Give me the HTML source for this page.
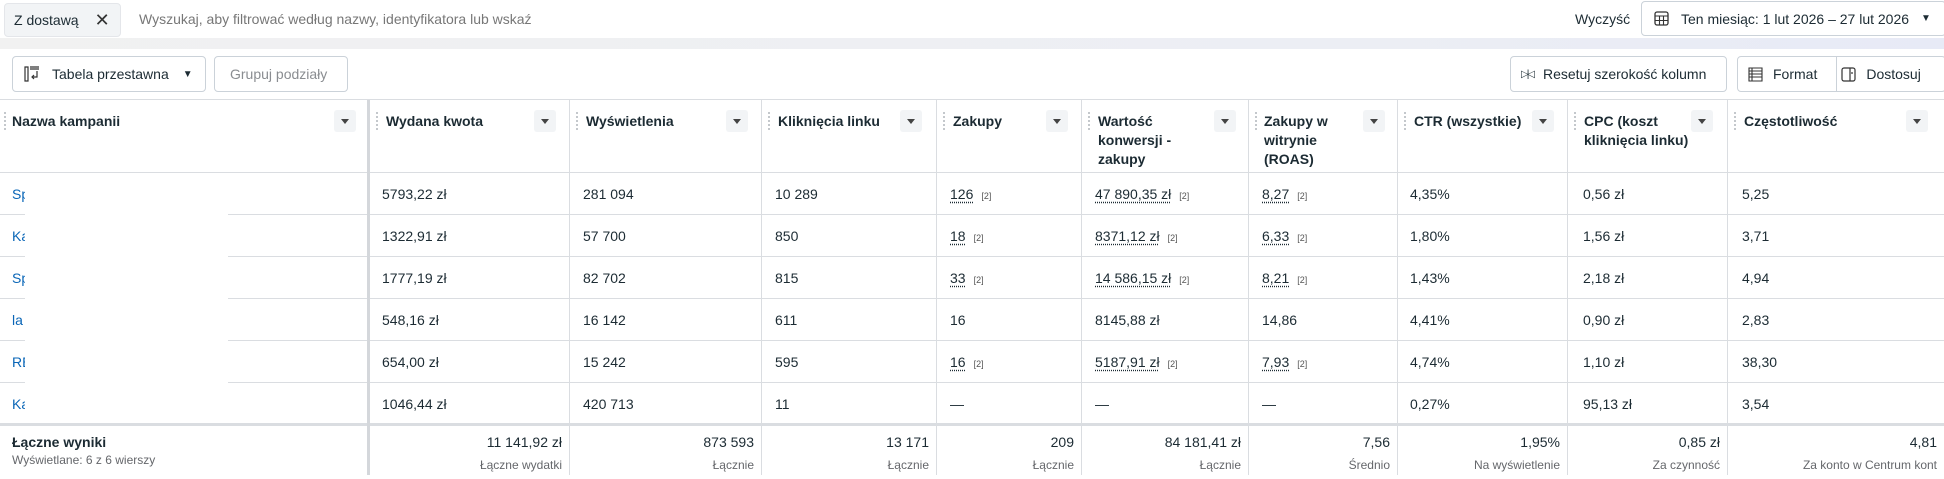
<!DOCTYPE html>
<html><head><meta charset="utf-8"><style>
*{box-sizing:border-box;margin:0;padding:0}
body{width:1944px;height:479px;overflow:hidden;background:#fff;font-family:"Liberation Sans",sans-serif;color:#1c2b33;font-size:14px;position:relative}
.a{position:absolute}
.btn{position:absolute;border:1px solid #cbd2d9;border-radius:4px;background:#fff;display:flex;align-items:center;font-size:14px}
.hl{position:absolute;left:0;width:1944px;height:1px;background:#dadde1}
.vl{position:absolute;top:100px;height:375px;width:1px;background:#dadde1}
.th{position:absolute;top:112px;font-weight:bold;font-size:14px;line-height:19px}
.sb{position:absolute;top:110px;width:22px;height:22px;background:#f2f4f6;border-radius:3px}
.sb:after{content:"";position:absolute;left:7px;top:9px;border-left:4px solid transparent;border-right:4px solid transparent;border-top:5px solid #444}
.dh{position:absolute;top:112px;width:2px;height:18px;border-left:2px dotted #c4c8cc}
.c{position:absolute;font-size:14px;white-space:nowrap}
.u{text-decoration:underline dotted;text-underline-offset:3px}
.s{font-size:9px;color:#555;margin-left:8px}
.t{position:absolute;text-align:right;font-size:14px;white-space:nowrap}
.t small{display:block;font-size:12px;color:#65676b;margin-top:8px}
.lk{color:#0a66b7}
</style></head><body>
<div class="btn" style="left:4px;top:3px;width:117px;height:34px;background:#f2f4f6;border-color:#e4e6ea;padding-left:9px">Z dostawą<span style="margin-left:16px;font-size:18px;color:#333">✕</span></div>
<div class="a" style="left:139px;top:11px;color:#777;font-size:14px">Wyszukaj, aby filtrować według nazwy, identyfikatora lub wskaź</div>
<div class="a" style="left:1575px;top:11px;font-size:14px">Wyczyść</div>
<div class="btn" style="left:1641px;top:1px;width:305px;height:35px;padding-left:12px">
<svg width="15" height="15" viewBox="0 0 15 15"><rect x="1" y="1" width="13" height="13" rx="2" fill="none" stroke="#333" stroke-width="1.3"/><path d="M1 5h13M1 9.5h13M5.5 5v9M9.5 5v9" stroke="#333" stroke-width="1.1"/></svg>
<span style="margin-left:12px">Ten miesiąc: 1 lut 2026 – 27 lut 2026</span><span style="margin-left:12px;font-size:10px">▼</span></div>
<div class="a" style="left:0;top:38px;width:1944px;height:11px;background:linear-gradient(90deg,#f1f1f1,#eceef4 70%,#e7eaf6)"></div>
<div class="btn" style="left:12px;top:56px;width:194px;height:36px;padding-left:11px">
<svg width="16" height="16" viewBox="0 0 16 16"><path d="M1 1v14h3V1zM6 1h9M6 3h9M13 5v6H8M10 9l-2 2 2 2" fill="none" stroke="#333" stroke-width="1.2"/></svg>
<span style="margin-left:12px">Tabela przestawna</span><span style="margin-left:14px;font-size:10px">▼</span></div>
<div class="btn" style="left:214px;top:56px;width:134px;height:36px;padding-left:15px;color:#8a8d91">Grupuj podziały</div>
<div class="btn" style="left:1510px;top:56px;width:217px;height:36px;padding-left:10px">
<span style="font-size:10px;letter-spacing:-2px">▷|◁</span><span style="margin-left:10px">Resetuj szerokość kolumn</span></div>
<div class="btn" style="left:1737px;top:56px;width:209px;height:36px;padding-left:10px">
<svg width="15" height="15" viewBox="0 0 15 15"><path d="M1 1h13v13H1zM1 4h13M1 7h13M1 10h13M4 1v13" fill="none" stroke="#333" stroke-width="1.1"/></svg>
<span style="margin-left:10px">Format</span>
<span style="position:absolute;left:98px;top:0;width:1px;height:34px;background:#cbd2d9"></span>
<svg style="margin-left:24px" width="15" height="15" viewBox="0 0 15 15"><rect x="1" y="1" width="13" height="13" rx="2" fill="none" stroke="#333" stroke-width="1.2"/><path d="M9 1v13M11 5v2" stroke="#333" stroke-width="1.2"/></svg>
<span style="margin-left:10px">Dostosuj</span></div>
<div class="hl" style="top:99px"></div>
<div class="hl" style="top:172px"></div>
<div class="hl" style="top:214px"></div>
<div class="hl" style="top:256px"></div>
<div class="hl" style="top:298px"></div>
<div class="hl" style="top:340px"></div>
<div class="hl" style="top:382px"></div>
<div class="hl" style="top:423px;height:3px"></div>
<div class="vl" style="left:367px;width:3px;background:#d4d7db"></div>
<div class="vl" style="left:569px"></div>
<div class="vl" style="left:761px"></div>
<div class="vl" style="left:936px"></div>
<div class="vl" style="left:1081px"></div>
<div class="vl" style="left:1248px"></div>
<div class="vl" style="left:1397px"></div>
<div class="vl" style="left:1567px"></div>
<div class="vl" style="left:1727px"></div>
<div class="dh" style="left:4px"></div><div class="th" style="left:12px">Nazwa kampanii</div><div class="sb" style="left:334px"></div>
<div class="dh" style="left:376px"></div><div class="th" style="left:386px">Wydana kwota</div><div class="sb" style="left:534px"></div>
<div class="dh" style="left:576px"></div><div class="th" style="left:586px">Wyświetlenia</div><div class="sb" style="left:726px"></div>
<div class="dh" style="left:768px"></div><div class="th" style="left:778px">Kliknięcia linku</div><div class="sb" style="left:900px"></div>
<div class="dh" style="left:943px"></div><div class="th" style="left:953px">Zakupy</div><div class="sb" style="left:1046px"></div>
<div class="dh" style="left:1088px"></div><div class="th" style="left:1098px">Wartość<br>konwersji -<br>zakupy</div><div class="sb" style="left:1214px"></div>
<div class="dh" style="left:1255px"></div><div class="th" style="left:1264px">Zakupy w<br>witrynie<br>(ROAS)</div><div class="sb" style="left:1363px"></div>
<div class="dh" style="left:1404px"></div><div class="th" style="left:1414px">CTR (wszystkie)</div><div class="sb" style="left:1532px"></div>
<div class="dh" style="left:1574px"></div><div class="th" style="left:1584px">CPC (koszt<br>kliknięcia linku)</div><div class="sb" style="left:1691px"></div>
<div class="dh" style="left:1734px"></div><div class="th" style="left:1744px">Częstotliwość</div><div class="sb" style="left:1906px"></div>
<div class="c lk" style="left:12px;top:186px">Sp</div><div class="c lk" style="left:12px;top:228px">Ka</div><div class="c lk" style="left:12px;top:270px">Sp</div><div class="c lk" style="left:12px;top:312px">la</div><div class="c lk" style="left:12px;top:354px">RE</div><div class="c lk" style="left:12px;top:396px">Ka</div>
<div class="a" style="left:25px;top:173px;width:203px;height:250px;background:#fff"></div>

<div class="c" style="left:382px;top:186px">5793,22 zł</div><div class="c" style="left:583px;top:186px">281 094</div><div class="c" style="left:775px;top:186px">10 289</div><div class="c" style="left:950px;top:186px"><span class="u">126</span><span class="s">[2]</span></div><div class="c" style="left:1095px;top:186px"><span class="u">47 890,35 zł</span><span class="s">[2]</span></div><div class="c" style="left:1262px;top:186px"><span class="u">8,27</span><span class="s">[2]</span></div><div class="c" style="left:1410px;top:186px">4,35%</div><div class="c" style="left:1583px;top:186px">0,56 zł</div><div class="c" style="left:1742px;top:186px">5,25</div>

<div class="c" style="left:382px;top:228px">1322,91 zł</div><div class="c" style="left:583px;top:228px">57 700</div><div class="c" style="left:775px;top:228px">850</div><div class="c" style="left:950px;top:228px"><span class="u">18</span><span class="s">[2]</span></div><div class="c" style="left:1095px;top:228px"><span class="u">8371,12 zł</span><span class="s">[2]</span></div><div class="c" style="left:1262px;top:228px"><span class="u">6,33</span><span class="s">[2]</span></div><div class="c" style="left:1410px;top:228px">1,80%</div><div class="c" style="left:1583px;top:228px">1,56 zł</div><div class="c" style="left:1742px;top:228px">3,71</div>

<div class="c" style="left:382px;top:270px">1777,19 zł</div><div class="c" style="left:583px;top:270px">82 702</div><div class="c" style="left:775px;top:270px">815</div><div class="c" style="left:950px;top:270px"><span class="u">33</span><span class="s">[2]</span></div><div class="c" style="left:1095px;top:270px"><span class="u">14 586,15 zł</span><span class="s">[2]</span></div><div class="c" style="left:1262px;top:270px"><span class="u">8,21</span><span class="s">[2]</span></div><div class="c" style="left:1410px;top:270px">1,43%</div><div class="c" style="left:1583px;top:270px">2,18 zł</div><div class="c" style="left:1742px;top:270px">4,94</div>

<div class="c" style="left:382px;top:312px">548,16 zł</div><div class="c" style="left:583px;top:312px">16 142</div><div class="c" style="left:775px;top:312px">611</div><div class="c" style="left:950px;top:312px">16</div><div class="c" style="left:1095px;top:312px">8145,88 zł</div><div class="c" style="left:1262px;top:312px">14,86</div><div class="c" style="left:1410px;top:312px">4,41%</div><div class="c" style="left:1583px;top:312px">0,90 zł</div><div class="c" style="left:1742px;top:312px">2,83</div>

<div class="c" style="left:382px;top:354px">654,00 zł</div><div class="c" style="left:583px;top:354px">15 242</div><div class="c" style="left:775px;top:354px">595</div><div class="c" style="left:950px;top:354px"><span class="u">16</span><span class="s">[2]</span></div><div class="c" style="left:1095px;top:354px"><span class="u">5187,91 zł</span><span class="s">[2]</span></div><div class="c" style="left:1262px;top:354px"><span class="u">7,93</span><span class="s">[2]</span></div><div class="c" style="left:1410px;top:354px">4,74%</div><div class="c" style="left:1583px;top:354px">1,10 zł</div><div class="c" style="left:1742px;top:354px">38,30</div>

<div class="c" style="left:382px;top:396px">1046,44 zł</div><div class="c" style="left:583px;top:396px">420 713</div><div class="c" style="left:775px;top:396px">11</div><div class="c" style="left:950px;top:396px">—</div><div class="c" style="left:1095px;top:396px">—</div><div class="c" style="left:1262px;top:396px">—</div><div class="c" style="left:1410px;top:396px">0,27%</div><div class="c" style="left:1583px;top:396px">95,13 zł</div><div class="c" style="left:1742px;top:396px">3,54</div>

<div class="c" style="left:12px;top:434px;font-weight:bold">Łączne wyniki</div>
<div class="c" style="left:12px;top:453px;font-size:12px;color:#65676b">Wyświetlane: 6 z 6 wierszy</div>
<div class="t" style="right:1382px;top:434px">11 141,92 zł<small>Łączne wydatki</small></div>
<div class="t" style="right:1190px;top:434px">873 593<small>Łącznie</small></div>
<div class="t" style="right:1015px;top:434px">13 171<small>Łącznie</small></div>
<div class="t" style="right:870px;top:434px">209<small>Łącznie</small></div>
<div class="t" style="right:703px;top:434px">84 181,41 zł<small>Łącznie</small></div>
<div class="t" style="right:554px;top:434px">7,56<small>Średnio</small></div>
<div class="t" style="right:384px;top:434px">1,95%<small>Na wyświetlenie</small></div>
<div class="t" style="right:224px;top:434px">0,85 zł<small>Za czynność</small></div>
<div class="t" style="right:7px;top:434px">4,81<small>Za konto w Centrum kont</small></div>
</body></html>
